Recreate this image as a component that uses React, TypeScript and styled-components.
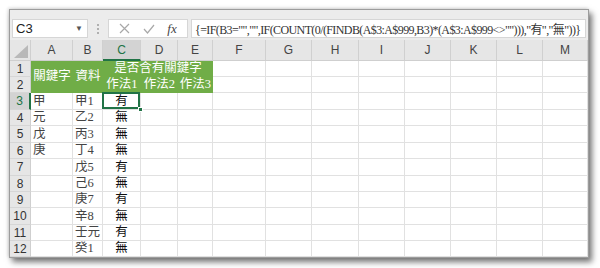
import React from "react";
import styled, { createGlobalStyle, css } from "styled-components";

const Global = createGlobalStyle`
  html, body { margin: 0; padding: 0; background: #ffffff; }
  body { width: 600px; height: 268px; overflow: hidden; }
`;

const Window = styled.div`
  margin: 9px 0 0 9px;
  width: 578px;
  border: 1px solid #9c9c9c;
  background: #ececec;
  box-shadow: 3px 4px 6px rgba(0, 0, 0, 0.55), -1px -1px 3px rgba(0, 0, 0, 0.15);
  display: flex;
  flex-direction: column;
`;

const Toolbar = styled.div`
  height: 30px;
  box-sizing: border-box;
  padding: 9px 2px 2px 2px;
  display: flex;
  align-items: stretch;
  font-family: "Liberation Sans", Arial, sans-serif;
`;

const NameBox = styled.div`
  width: 76px;
  box-sizing: border-box;
  background: #fff;
  border: 1px solid #d6d6d6;
  display: flex;
  align-items: center;
  justify-content: space-between;
  padding: 0 4px 0 3px;
  font-size: 13px;
  color: #222;
`;

const Caret = styled.span`
  font-size: 8px;
  color: #555;
`;

const Dots = styled.div`
  width: 20px;
  display: flex;
  flex-direction: column;
  align-items: center;
  justify-content: center;
  gap: 2px;
  & > i { width: 2px; height: 2px; background: #b0b0b0; display: block; }
`;

const FxBox = styled.div`
  width: 80px;
  box-sizing: border-box;
  background: #fff;
  border: 1px solid #d6d6d6;
  display: flex;
  align-items: center;
  justify-content: space-around;
  padding: 0 4px;
  color: #b0b0b0;
`;

const Fx = styled.span`
  font-family: "Liberation Serif", serif;
  font-style: italic;
  font-size: 13px;
  color: #444;
`;

const FormulaBox = styled.div`
  flex: 1;
  margin-left: 3px;
  box-sizing: border-box;
  background: #fff;
  border: 1px solid #d6d6d6;
  display: flex;
  align-items: center;
  padding-left: 3px;
  font-family: "Liberation Serif", "Noto Sans CJK TC", serif;
  font-size: 12px;
  letter-spacing: -0.6px;
  color: #333;
  white-space: nowrap;
  overflow: hidden;
`;

const Sheet = styled.div`
  display: grid;
  grid-template-columns: 21px 42px 30px 38px 37px 35px 53px 46px 47px 46px 46px 46px 46px 45px;
  grid-template-rows: 21px 16px 16px 17px 16px 17px 16px 17px 16px 16px 17px 16px 16px;
  background: #fff;
`;

const Corner = styled.div`
  background: #e6e6e6;
  border-right: 1px solid #cfcfcf;
  border-bottom: 1px solid #cfcfcf;
  box-sizing: border-box;
  display: flex;
  align-items: flex-end;
  justify-content: flex-end;
  padding: 0 2px 2px 0;
`;

const ColHeader = styled.div<{ $active?: boolean }>`
  box-sizing: border-box;
  background: ${(p) => (p.$active ? "#d3d3d3" : "#e6e6e6")};
  border-right: 1px solid #d0d0d0;
  border-bottom: ${(p) => (p.$active ? "2px solid #217346" : "1px solid #cfcfcf")};
  display: flex;
  align-items: center;
  justify-content: center;
  font-family: "Liberation Sans", Arial, sans-serif;
  font-size: 12px;
  color: ${(p) => (p.$active ? "#217346" : "#444")};
  padding-top: ${(p) => (p.$active ? "1px" : "0")};
`;

const RowHeader = styled.div<{ $active?: boolean }>`
  box-sizing: border-box;
  background: ${(p) => (p.$active ? "#d3d3d3" : "#e6e6e6")};
  border-right: ${(p) => (p.$active ? "2px solid #217346" : "1px solid #cfcfcf")};
  border-bottom: 1px solid #d6d6d6;
  display: flex;
  align-items: center;
  justify-content: center;
  font-family: "Liberation Sans", Arial, sans-serif;
  font-size: 12px;
  color: ${(p) => (p.$active ? "#217346" : "#333")};
`;

const Cell = styled.div<{ $center?: boolean; $dark?: boolean; $selected?: boolean }>`
  box-sizing: border-box;
  position: relative;
  border-right: 1px solid #e1e1e1;
  border-bottom: 1px solid #e1e1e1;
  display: flex;
  align-items: center;
  justify-content: ${(p) => (p.$center ? "center" : "flex-start")};
  padding-left: ${(p) => (p.$center ? "0" : "2px")};
  font-family: "Liberation Serif", "Noto Sans CJK TC", serif;
  font-size: 12.5px;
  line-height: 1;
  color: ${(p) => (p.$dark ? "#111" : "#444")};
  ${(p) =>
    p.$selected &&
    css`
      &::after {
        content: "";
        position: absolute;
        left: -1px;
        top: -1px;
        right: 0;
        bottom: 0;
        border: 2px solid #217346;
      }
      &::before {
        content: "";
        position: absolute;
        right: -3px;
        bottom: -3px;
        width: 5px;
        height: 5px;
        background: #217346;
        border: 1px solid #fff;
        box-sizing: border-box;
        z-index: 2;
      }
    `}
`;

const Green = styled.div<{ $col: string; $row: string }>`
  grid-column: ${(p) => p.$col};
  grid-row: ${(p) => p.$row};
  background: #70ad47;
  color: #fff;
  display: flex;
  align-items: center;
  justify-content: center;
  font-family: "Liberation Serif", "Noto Sans CJK TC", serif;
  font-size: 12.5px;
  line-height: 1;
  white-space: nowrap;
  padding-bottom: 1px;
`;

const cols = ["A", "B", "C", "D", "E", "F", "G", "H", "I", "J", "K", "L", "M"];
const colA = ["甲", "元", "戊", "庚", "", "", "", "", "", ""];
const colB = ["甲1", "乙2", "丙3", "丁4", "戊5", "己6", "庚7", "辛8", "壬元", "癸1"];
const colC = ["有", "無", "無", "無", "有", "無", "有", "無", "有", "無"];

export default function App() {
  const rows: React.ReactNode[] = [];
  for (let r = 1; r <= 2; r++) {
    rows.push(
      <RowHeader key={`rh${r}`} style={{ gridColumn: 1, gridRow: r + 1 }}>
        {r}
      </RowHeader>
    );
    for (let c = 5; c < cols.length; c++) {
      rows.push(<Cell key={`c${r}-${c}`} style={{ gridColumn: c + 2, gridRow: r + 1 }} />);
    }
  }
  for (let i = 0; i < 10; i++) {
    const r = i + 3;
    rows.push(
      <RowHeader key={`rh${r}`} $active={r === 3}>
        {r}
      </RowHeader>
    );
    rows.push(<Cell key={`a${r}`}>{colA[i]}</Cell>);
    rows.push(<Cell key={`b${r}`}>{colB[i]}</Cell>);
    rows.push(
      <Cell key={`c${r}`} $center $dark $selected={r === 3}>
        {colC[i]}
      </Cell>
    );
    for (let c = 3; c < cols.length; c++) {
      rows.push(<Cell key={`x${r}-${c}`} />);
    }
  }

  return (
    <>
      <Global />
      <Window>
        <Toolbar>
          <NameBox>
            <span>C3</span>
            <Caret>▼</Caret>
          </NameBox>
          <Dots>
            <i />
            <i />
            <i />
          </Dots>
          <FxBox>
            <svg width="11" height="11" viewBox="0 0 11 11">
              <path d="M1 1 L10 10 M10 1 L1 10" stroke="#a8a8a8" strokeWidth="1.2" fill="none" />
            </svg>
            <svg width="12" height="10" viewBox="0 0 12 10">
              <path d="M1 5 L4.5 9 L11 1" stroke="#a8a8a8" strokeWidth="1.2" fill="none" />
            </svg>
            <Fx>fx</Fx>
          </FxBox>
          <FormulaBox>
            {'{=IF(B3="","",IF(COUNT(0/(FINDB(A$3:A$999,B3)*(A$3:A$999<>""))),"有","無"))}'}
          </FormulaBox>
        </Toolbar>
        <Sheet>
          <Corner>
            <svg width="14" height="13" viewBox="0 0 14 13">
              <path d="M14 0 L14 13 L0 13 Z" fill="#b9b9b9" />
            </svg>
          </Corner>
          {cols.map((c) => (
            <ColHeader key={c} $active={c === "C"}>
              {c}
            </ColHeader>
          ))}
          <Green $col="2" $row="2 / span 2">關鍵字</Green>
          <Green $col="3" $row="2 / span 2">資料</Green>
          <Green $col="4 / span 3" $row="2">是否含有關鍵字</Green>
          <Green $col="4" $row="3">作法1</Green>
          <Green $col="5" $row="3">作法2</Green>
          <Green $col="6" $row="3">作法3</Green>
          {rows}
        </Sheet>
      </Window>
    </>
  );
}
